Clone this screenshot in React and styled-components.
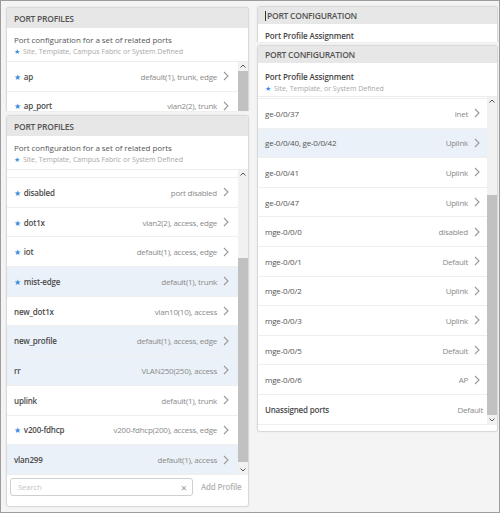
import React from 'react';
import styled, { createGlobalStyle } from 'styled-components';

const GlobalStyle = createGlobalStyle`
  html, body {
    margin: 0;
    padding: 0;
    background: #fff;
  }
  body {
    font-family: 'Open Sans', 'Liberation Sans', sans-serif;
  }
  * {
    box-sizing: border-box;
  }
`;

const Frame = styled.div`
  width: 500px;
  height: 513px;
  border: 1px solid #9c9c9c;
  background: #f4f4f4;
  display: flex;
  gap: 8px;
  padding-left: 5px;
  overflow: hidden;
`;

const Column = styled.div`
  width: ${p => p.$width}px;
  padding-top: ${p => p.$top}px;
  display: flex;
  flex-direction: column;
  gap: ${p => p.$gap}px;
`;

const Panel = styled.section`
  background: #fff;
  border: 1px solid #d9d9d9;
  border-radius: 3px;
  ${p => p.$cut && 'border-bottom: none; border-bottom-left-radius: 0; border-bottom-right-radius: 0;'}
  height: ${p => p.$height}px;
  overflow: hidden;
  display: flex;
  flex-direction: column;
  flex: none;
  box-shadow: 0 0 2px rgba(0, 0, 0, 0.08);
`;

const Header = styled.div`
  height: ${p => p.$h}px;
  flex: none;
  background: #e7e7e7;
  display: flex;
  align-items: center;
  padding: 0 7px;
  font-size: 8.5px;
  font-weight: 600;
  color: #555;
  letter-spacing: -0.25px;
`;

const Caret = styled.span`
  width: 1px;
  height: 10px;
  background: #333;
  margin-right: 1px;
`;

const Desc = styled.div`
  height: ${p => p.$h || 34}px;
  flex: none;
  padding: ${p => p.$pt}px 7px 0;
  border-bottom: 1px solid #ececec;
`;

const DescTitle = styled.div`
  font-size: 8px;
  font-weight: ${p => (p.$bold ? 600 : 400)};
  line-height: 12px;
  color: ${p => (p.$bold ? '#444' : '#555')};
  letter-spacing: ${p => (p.$bold ? '-0.1px' : '-0.05px')};
`;

const DescNote = styled.div`
  font-size: 7px;
  line-height: 11px;
  color: #a8a8a8;
`;

const Star = styled.span`
  color: #3d8fdc;
  font-size: ${p => p.$size || 7}px;
  margin-right: 3px;
`;

const ListArea = styled.div`
  height: ${p => p.$h}px;
  flex: none;
  display: flex;
  overflow: hidden;
`;

const List = styled.div`
  flex: 1;
  display: flex;
  flex-direction: column;
  overflow: hidden;
`;

const Spacer = styled.div`
  height: ${p => p.$h}px;
  flex: none;
  border-bottom: 1px solid #eeeeee;
`;

const Row = styled.div`
  height: ${p => p.$h}px;
  flex: none;
  display: flex;
  align-items: ${p => (p.$end ? 'flex-end' : 'center')};
  padding: 0 ${p => p.$pr}px 0 7px;
  background: ${p => (p.$shaded ? '#eaf1f8' : '#fff')};
  border-bottom: ${p => (p.$end ? 'none' : '1px solid #eeeeee')};
  font-size: 8px;
  color: #555;
  letter-spacing: -0.2px;
`;

const Label = styled.span`
  font-weight: ${p => (p.$bold ? 600 : 400)};
  color: ${p => (p.$bold ? '#4a4a4a' : '#555')};
`;

const Value = styled.span`
  margin-left: auto;
  color: #8a8a8a;
  letter-spacing: -0.25px;
`;

const Chevron = styled.svg`
  width: 6px;
  height: 10px;
  margin-left: 6px;
  flex: none;
`;

const Scrollbar = styled.div`
  width: 10px;
  flex: none;
  background: #f1f1f1;
  display: flex;
  flex-direction: column;
`;

const Arrow = styled.div`
  height: ${p => p.$h || 8}px;
  flex: none;
  display: flex;
  align-items: center;
  justify-content: center;
`;

const Track = styled.div`
  flex: 1;
  display: flex;
  flex-direction: column;
`;

const Thumb = styled.div`
  margin-top: ${p => p.$top}px;
  height: ${p => p.$height}px;
  flex: none;
  background: #c1c1c1;
`;

const Footer = styled.div`
  flex: 1;
  display: flex;
  align-items: flex-start;
  gap: 8px;
  padding: 3px 3px 0;
`;

const SearchBox = styled.div`
  width: 183px;
  height: 18px;
  border: 1px solid #cfcfcf;
  border-radius: 3px;
  display: flex;
  align-items: center;
  padding: 0 5px 0 7px;
  font-size: 7.5px;
  color: #c4c4c4;
`;

const Clear = styled.span`
  margin-left: auto;
  font-size: 11px;
  color: #9a9a9a;
  line-height: 1;
`;

const AddButton = styled.span`
  font-size: 8px;
  font-weight: 600;
  color: #b3b3b3;
  line-height: 18px;
  letter-spacing: -0.2px;
`;

const ChevronRight = () => (
  <Chevron viewBox="0 0 6 10">
    <polyline points="1,1 5,5 1,9" fill="none" stroke="#9a9a9a" strokeWidth="1.1" />
  </Chevron>
);

const Up = () => (
  <svg width="6" height="4" viewBox="0 0 6 4">
    <polyline points="0.5,3.5 3,1 5.5,3.5" fill="none" stroke="#555" strokeWidth="1" />
  </svg>
);

const Down = () => (
  <svg width="6" height="4" viewBox="0 0 6 4">
    <polyline points="0.5,0.5 3,3 5.5,0.5" fill="none" stroke="#555" strokeWidth="1" />
  </svg>
);

const profiles = [
  { name: 'disabled', value: 'port disabled', star: true },
  { name: 'dot1x', value: 'vlan2(2), access, edge', star: true },
  { name: 'iot', value: 'default(1), access, edge', star: true },
  { name: 'mist-edge', value: 'default(1), trunk', star: true, shaded: true },
  { name: 'new_dot1x', value: 'vlan10(10), access' },
  { name: 'new_profile', value: 'default(1), access, edge', shaded: true },
  { name: 'rr', value: 'VLAN250(250), access', shaded: true },
  { name: 'uplink', value: 'default(1), trunk' },
  { name: 'v200-fdhcp', value: 'v200-fdhcp(200), access, edge', star: true },
  { name: 'vlan299', value: 'default(1), access', shaded: true },
];

const ports = [
  { name: 'ge-0/0/37', value: 'inet' },
  { name: 'ge-0/0/40, ge-0/0/42', value: 'Uplink', shaded: true },
  { name: 'ge-0/0/41', value: 'Uplink' },
  { name: 'ge-0/0/47', value: 'Uplink' },
  { name: 'mge-0/0/0', value: 'disabled' },
  { name: 'mge-0/0/1', value: 'Default' },
  { name: 'mge-0/0/2', value: 'Uplink' },
  { name: 'mge-0/0/3', value: 'Uplink' },
  { name: 'mge-0/0/5', value: 'Default' },
  { name: 'mge-0/0/6', value: 'AP' },
];

const ProfileRow = ({ item, h = 29.7, end }) => (
  <Row $h={h} $pr={9} $shaded={item.shaded} $end={end}>
    {item.star && <Star $size={8}>★</Star>}
    <Label $bold>{item.name}</Label>
    <Value>{item.value}</Value>
    <ChevronRight />
  </Row>
);

const PortRow = ({ item }) => (
  <Row $h={29.6} $pr={7} $shaded={item.shaded}>
    <Label>{item.name}</Label>
    <Value>{item.value}</Value>
    <ChevronRight />
  </Row>
);

const ProfilesIntro = () => (
  <Desc $pt={6}>
    <DescTitle>Port configuration for a set of related ports</DescTitle>
    <DescNote>
      <Star>★</Star>Site, Template, Campus Fabric or System Defined
    </DescNote>
  </Desc>
);

const AssignmentIntro = ({ note, pt = 8 }) => (
  <Desc $pt={pt}>
    <DescTitle $bold>Port Profile Assignment</DescTitle>
    {note && (
      <DescNote>
        <Star>★</Star>Site, Template, or System Defined
      </DescNote>
    )}
  </Desc>
);

const App = () => (
  <>
    <GlobalStyle />
    <Frame>
      <Column $width={243} $top={6} $gap={4}>
        <Panel $height={104} $cut>
          <Header $h={20}>PORT PROFILES</Header>
          <ProfilesIntro />
          <ListArea $h={49}>
            <List>
              <ProfileRow item={{ name: 'ap', value: 'default(1), trunk, edge', star: true }} />
              <ProfileRow end h={19.3} item={{ name: 'ap_port', value: 'vlan2(2), trunk', star: true }} />
            </List>
            <Scrollbar>
              <Arrow $h={8}><Up /></Arrow>
              <Track>
                <Thumb $top={1} $height={60} />
              </Track>
            </Scrollbar>
          </ListArea>
        </Panel>
        <Panel $height={392}>
          <Header $h={20}>PORT PROFILES</Header>
          <ProfilesIntro />
          <ListArea $h={305}>
            <List>
              <Spacer $h={8} />
              {profiles.map(item => (
                <ProfileRow key={item.name} item={item} />
              ))}
            </List>
            <Scrollbar>
              <Arrow $h={8}><Up /></Arrow>
              <Track>
                <Thumb $top={80} $height={204} />
              </Track>
              <Arrow $h={10}><Down /></Arrow>
            </Scrollbar>
          </ListArea>
          <Footer>
            <SearchBox>
              Search
              <Clear>×</Clear>
            </SearchBox>
            <AddButton>Add Profile</AddButton>
          </Footer>
        </Panel>
      </Column>
      <Column $width={241} $top={5} $gap={3}>
        <Panel $height={36} $cut>
          <Header $h={17}>
            <Caret />
            PORT CONFIGURATION
          </Header>
          <AssignmentIntro pt={6} />
        </Panel>
        <Panel $height={387}>
          <Header $h={17}>PORT CONFIGURATION</Header>
          <AssignmentIntro note />
          <ListArea $h={328}>
            <List>
              <Spacer $h={2} />
              {ports.map(item => (
                <PortRow key={item.name} item={item} />
              ))}
              <Row $h={29.6} $pr={4}>
                <Label $bold>Unassigned ports</Label>
                <Value>Default</Value>
              </Row>
            </List>
            <Scrollbar>
              <Arrow $h={8}><Up /></Arrow>
              <Track>
                <Thumb $top={90} $height={220} />
              </Track>
              <Arrow $h={10}><Down /></Arrow>
            </Scrollbar>
          </ListArea>
        </Panel>
      </Column>
    </Frame>
  </>
);

export default App;
